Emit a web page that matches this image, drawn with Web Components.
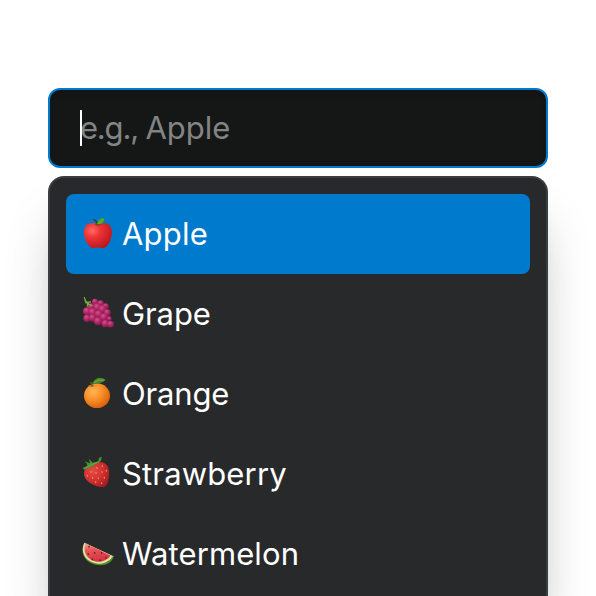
<!DOCTYPE html>
<html lang="en">
<head>
<meta charset="utf-8">
<title>Combobox</title>
<style>
html,body{margin:0;height:100%;overflow:hidden;background:#fff}
body{font-family:Inter,"Liberation Sans",sans-serif;font-size:31px;line-height:48px;color:#fff}
</style>
</head>
<body>
<fruit-combobox></fruit-combobox>
<script>
const icons = {
apple:`<defs><radialGradient id="a" cx=".3" cy=".3" r=".8"><stop stop-color="#ff6b62"/><stop offset=".35" stop-color="#ed3538"/><stop offset="1" stop-color="#b9141b"/></radialGradient></defs>
<path fill="url(#a)" d="M65 44C55 38 40 37 31 46C20 57 22 80 31 96C38 109 48 116 56 114C62 112 69 112 75 114C86 116 95 108 101 96C109 79 112 57 100 46C91 37 76 38 65 44Z"/>
<path fill="#8e1719" opacity=".55" d="M55 43Q66 39 77 43Q68 51 55 43Z"/>
<path d="M66 44Q63 33 54 29" fill="none" stroke="#51301e" stroke-width="4.5" stroke-linecap="round"/>
<path fill="#4da51d" d="M63 43C65 28 75 23 84 25C86 35 79 46 63 43Z"/><path d="M66 41Q74 36 81 28" stroke="#87cb43" stroke-width="2" fill="none"/>`,
grape:`<defs><radialGradient id="g" cx=".38" cy=".3" r=".75"><stop stop-color="#d9508f"/><stop offset=".45" stop-color="#b52a6a"/><stop offset="1" stop-color="#7c1749"/></radialGradient></defs>
<path fill="#7c1a4c" d="M40 45L75 32L96 52L105 100L88 107L56 98L27 84Z"/>
<g fill="url(#g)"><circle cx="57" cy="35" r="9"/><circle cx="74" cy="40" r="9"/><circle cx="45" cy="50" r="10"/><circle cx="89" cy="49" r="9"/><circle cx="33" cy="64" r="12"/><circle cx="64" cy="52" r="12"/><circle cx="80" cy="58" r="12"/><circle cx="50" cy="67" r="12"/><circle cx="94" cy="68" r="10"/><circle cx="33" cy="85" r="11"/><circle cx="68" cy="73" r="12"/><circle cx="50" cy="84" r="11"/><circle cx="84" cy="82" r="12"/><circle cx="66" cy="94" r="12"/><circle cx="100" cy="86" r="7"/><circle cx="88" cy="101" r="11"/><circle cx="104" cy="103" r="10"/></g>
<path d="M25 23Q30 43 48 46M29 38L43 36M27 31Q37 43 34 48" stroke="#79ae38" stroke-width="4" fill="none" stroke-linecap="round"/>`,
orange:`<defs><radialGradient id="o" cx=".36" cy=".33" r=".72"><stop stop-color="#ffb459"/><stop offset=".5" stop-color="#f88f27"/><stop offset="1" stop-color="#d95d0c"/></radialGradient></defs>
<ellipse cx="63" cy="77" rx="39" ry="37" fill="url(#o)"/><path fill="#984b0c" opacity=".5" d="M39 49Q48 42 58 47Q49 54 39 49Z"/>
<path d="M47 49L49 40L42 38M49 42Q56 36 61 31" fill="none" stroke="#426b22" stroke-width="4"/>
<path fill="#43862b" d="M50 40C56 22 75 18 89 30C76 41 64 42 50 40Z"/><path d="M53 38Q68 27 85 30" stroke="#87b953" stroke-width="2.5" fill="none"/>`,
strawberry:`<defs><radialGradient id="s" cx=".35" cy=".35" r=".8"><stop stop-color="#e54b46"/><stop offset=".55" stop-color="#cf2d2f"/><stop offset="1" stop-color="#9e171e"/></radialGradient></defs>
<path fill="url(#s)" d="M32 51C48 38 63 35 77 37C95 40 101 56 99 75C98 92 95 108 84 111C64 113 35 99 27 83C22 72 24 58 32 51Z"/>
<path fill="#489335" d="M20 53L34 48L32 40L25 34L42 40L39 26L50 38L67 34L69 24L78 20L74 34L65 40L54 43L57 51L45 48L39 57L34 53L25 60Z"/>
<path stroke="#78b74a" stroke-width="2" fill="none" d="M28 54L46 44L69 36"/>
<g fill="#e59a48"><ellipse cx="63" cy="54" rx="2" ry="3"/><ellipse cx="79" cy="48" rx="2" ry="3"/><ellipse cx="45" cy="66" rx="2" ry="3"/><ellipse cx="60" cy="69" rx="2" ry="3"/><ellipse cx="78" cy="66" rx="2" ry="3"/><ellipse cx="34" cy="77" rx="2" ry="3"/><ellipse cx="50" cy="83" rx="2" ry="3"/><ellipse cx="67" cy="85" rx="2" ry="3"/><ellipse cx="85" cy="83" rx="2" ry="3"/><ellipse cx="59" cy="97" rx="2" ry="3"/><ellipse cx="77" cy="100" rx="2" ry="3"/><ellipse cx="91" cy="62" rx="2" ry="3"/></g>`,
watermelon:`<defs><linearGradient id="w" x2=".3" y2="1"><stop stop-color="#f4a09a"/><stop offset=".4" stop-color="#e95459"/><stop offset="1" stop-color="#d93245"/></linearGradient></defs>
<path fill="#568c2e" d="M24 42C12 66 25 90 45 100C73 112 107 105 114 78L108 77Z"/>
<path fill="#dce4a0" d="M25 38C14 61 24 84 43 94C65 107 95 103 111 78Z"/>
<path fill="url(#w)" d="M29 40C20 61 29 80 46 90C66 100 88 96 104 77Z"/>
<g fill="#622027"><ellipse cx="39" cy="50" rx="2.3" ry="3"/><ellipse cx="56" cy="69" rx="2.3" ry="3"/><ellipse cx="37" cy="73" rx="2.3" ry="3"/><ellipse cx="77" cy="69" rx="2.3" ry="3"/><ellipse cx="49" cy="88" rx="2.3" ry="3"/><ellipse cx="72" cy="91" rx="2.3" ry="3"/><ellipse cx="90" cy="83" rx="2.3" ry="3"/></g>`
};
class FruitIcon extends HTMLElement{
 connectedCallback(){this.attachShadow({mode:'open'}).innerHTML=`<style>:host{display:block;width:44px;height:44px;flex:none}svg{display:block}</style><svg width="44" height="44" viewBox="0 0 132 132" aria-hidden="true">${icons[this.getAttribute('name')]}</svg>`}
}
class FruitOption extends HTMLElement{
 connectedCallback(){this.attachShadow({mode:'open'}).innerHTML=`<style>:host{display:flex;box-sizing:border-box;height:80px;padding:16px 10px;gap:2px;border-radius:8px}:host([active]){background:#007acc}span{white-space:nowrap}</style><fruit-icon name="${this.getAttribute('icon')}"></fruit-icon><span><slot></slot></span>`}
}
class FruitField extends HTMLElement{
 connectedCallback(){this.attachShadow({mode:'open'}).innerHTML=`<style>:host{display:flex;align-items:center;box-sizing:border-box;height:80px;padding:0 30px;border:2px solid #007acc;border-radius:12px;background:#141716;box-shadow:inset 0 4px 6px rgba(0,0,0,.15);color:#838483}i{width:2px;height:36px;background:#fff;margin-right:-2px;z-index:1}span{white-space:nowrap}</style><i></i><span><slot></slot></span>`}
}
class FruitPopover extends HTMLElement{
 connectedCallback(){this.attachShadow({mode:'open'}).innerHTML=`<style>:host{display:block;box-sizing:border-box;flex:1;min-height:0;padding:16px;border:2px solid #3b3d40;border-bottom:0;border-radius:16px 16px 0 0;background:#28292b;box-shadow:0 40px 50px -10px rgba(0,0,0,.25),0 80px 50px -10px rgba(0,0,0,.04),0 16px 20px -12px rgba(0,0,0,.1)}</style><slot></slot>`}
}
class FruitCombobox extends HTMLElement{
 connectedCallback(){this.attachShadow({mode:'open'}).innerHTML=`<style>:host{display:flex;flex-direction:column;gap:8px;box-sizing:border-box;height:100vh;overflow:hidden;padding:88px 48px 0}</style>
<fruit-field><span style="letter-spacing:-1.2px">e.g., </span><span>Apple</span></fruit-field>
<fruit-popover>
<fruit-option active icon="apple" style="letter-spacing:.2px">Apple</fruit-option>
<fruit-option icon="grape" style="letter-spacing:-.1px">Grape</fruit-option>
<fruit-option icon="orange" style="letter-spacing:-.15px">Orange</fruit-option>
<fruit-option icon="strawberry" style="letter-spacing:.15px">Strawberry</fruit-option>
<fruit-option icon="watermelon" style="letter-spacing:.1px">Watermelon</fruit-option>
</fruit-popover>`}
}
customElements.define('fruit-icon',FruitIcon);
customElements.define('fruit-option',FruitOption);
customElements.define('fruit-field',FruitField);
customElements.define('fruit-popover',FruitPopover);
customElements.define('fruit-combobox',FruitCombobox);
</script>
</body>
</html>
